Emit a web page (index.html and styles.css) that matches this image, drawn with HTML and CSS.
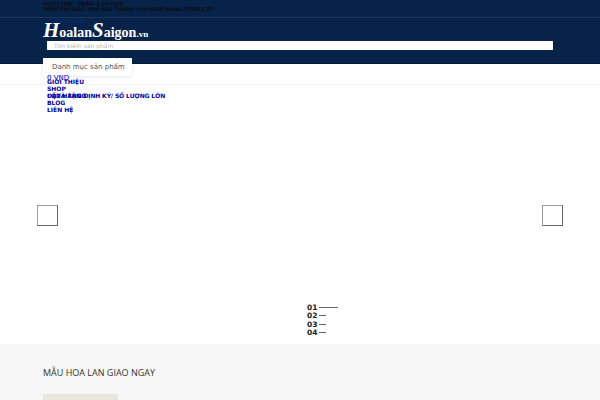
FILE: index.html
```html
<!DOCTYPE html>
<html lang="vi">
<head>
    <meta charset="UTF-8">
    <meta name="viewport" content="width=device-width, initial-scale=1.0">
    <title>Hoa Lan Sài Gòn</title>
    <link rel="stylesheet" href="styles.css">
</head>
<body>
    <header class="site-header">
        <div class="top-bar">
            <div class="wrap">
                <p class="top-line">HOTLINE: 0984-235-008</p>
                <p class="top-line top-line-long">MIỄN PHÍ GIAO HOA NỘI THÀNH CHO ĐƠN HÀNG TRÊN 1TR</p>
            </div>
        </div>
        <div class="wrap brand-row">
            <a class="account-link" href="#">Tài khoản</a>
            <a class="logo" href="#"><span class="logo-cap">H</span>oalan<span class="logo-cap">S</span>aigon<span class="logo-tld">.vn</span></a>
        </div>
        <div class="search-row">
            <input class="search-input" type="text" placeholder="Tìm kiếm sản phẩm">
        </div>
    </header>

    <nav class="main-nav">
        <div class="wrap">
            <div class="category-box">Danh mục sản phẩm</div>
            <a class="cart-link" href="#">0 VND</a>
            <ul class="menu">
                <li><a href="#">GIỚI THIỆU</a></li>
                <li><a href="#">SHOP</a></li>
                <li><a class="menu-long" href="#">ĐẶT HÀNG ĐỊNH KỲ/ SỐ LƯỢNG LỚN</a><a class="menu-over" href="#">QUÀ TẶNG</a></li>
                <li><a href="#">BLOG</a></li>
                <li><a href="#">LIÊN HỆ</a></li>
            </ul>
        </div>
    </nav>

    <section class="slider">
        <button class="slider-btn slider-prev"></button>
        <button class="slider-btn slider-next"></button>
        <ol class="slider-dots">
            <li><b>01</b><span class="dash dash-active"></span></li>
            <li><b>02</b><span class="dash"></span></li>
            <li><b>03</b><span class="dash"></span></li>
            <li><b>04</b><span class="dash"></span></li>
        </ol>
    </section>

    <section class="products">
        <div class="wrap">
            <h2 class="products-title">MẪU HOA LAN GIAO NGAY</h2>
            <div class="product-thumb"></div>
        </div>
    </section>
</body>
</html>
```

FILE: styles.css
```css
html, body {
    height: 400px;
    overflow: hidden;
}
body {
    margin: 0;
    font-family: "DejaVu Sans", sans-serif;
    background: #ffffff;
}
.wrap {
    margin: 0 43px;
}
.site-header {
    height: 64px;
    background: #07234a;
    border-bottom: 1px solid #04183a;
    box-sizing: border-box;
}
.top-bar {
    height: 18px;
    box-sizing: border-box;
    border-bottom: 1px solid #1c3658;
    padding-top: 1px;
}
.top-line {
    margin: 0;
    height: 5px;
    line-height: 6px;
    font-size: 6px;
    font-weight: bold;
    color: #0b0f1a;
}
.top-line-long {
    font-size: 5.5px;
    letter-spacing: -0.24px;
    white-space: nowrap;
}
.brand-row {
    position: relative;
    height: 23px;
}
.account-link {
    position: absolute;
    top: -1px;
    left: 12px;
    font-size: 6px;
    line-height: 7px;
    color: #0a2f86;
    text-decoration: none;
}
.logo {
    display: block;
    padding-top: 2px;
    font-family: "Liberation Serif", serif;
    font-size: 14px;
    line-height: 20px;
    font-weight: bold;
    color: #ffffff;
    text-decoration: none;
    white-space: nowrap;
}
.logo-cap {
    font-size: 21px;
    font-style: italic;
}
.logo-tld {
    font-size: 9px;
}
.search-row {
    padding-left: 47px;
}
.search-input {
    display: block;
    width: 506px;
    height: 9px;
    box-sizing: border-box;
    margin: 0;
    padding: 0 7px;
    border: 0;
    background: #ffffff;
    font-family: "DejaVu Sans", sans-serif;
    font-size: 6px;
    outline: 0;
}
.search-input::placeholder {
    color: #b5b5b5;
}
.main-nav {
    position: relative;
    display: flow-root;
    height: 56px;
}
.main-nav::after {
    content: "";
    position: absolute;
    left: 0;
    right: 0;
    top: 20px;
    height: 1px;
    background: #f5f5f5;
}
.main-nav .wrap {
    display: flow-root;
}
.category-box {
    position: relative;
    z-index: 1;
    width: 89px;
    height: 18px;
    margin-top: -6px;
    box-sizing: border-box;
    padding-left: 9px;
    background: #ffffff;
    box-shadow: 0 1px 3px rgba(0, 0, 0, 0.1);
    font-size: 7px;
    line-height: 18px;
    color: #555555;
    white-space: nowrap;
}
.cart-link {
    position: absolute;
    z-index: 1;
    top: 10px;
    left: 47px;
    font-size: 7px;
    line-height: 9px;
    color: #0000c8;
    text-decoration: none;
}
.menu {
    position: relative;
    z-index: 1;
    list-style: none;
    margin: 2px 0 0;
    padding: 0 0 0 4px;
}
.menu li {
    position: relative;
    height: 7px;
    font-size: 6px;
    line-height: 7px;
}
.menu a {
    font-weight: bold;
    color: #0000a8;
    text-decoration: none;
    white-space: nowrap;
}
.menu .menu-long {
    letter-spacing: -0.13px;
}
.menu-over {
    position: absolute;
    left: 4px;
    top: 0;
}
.slider {
    position: relative;
    height: 224px;
    background: #ffffff;
}
.slider-btn {
    position: absolute;
    top: 85px;
    width: 21px;
    height: 21px;
    padding: 0;
    background: #ffffff;
    border: 1px solid #9c9c9c;
    border-right-color: #666666;
    border-bottom-color: #666666;
}
.slider-prev {
    left: 37px;
}
.slider-next {
    right: 37px;
}
.slider-dots {
    position: absolute;
    left: 307px;
    top: 183px;
    margin: 0;
    padding: 0;
    list-style: none;
}
.slider-dots li {
    display: flex;
    align-items: center;
    gap: 2px;
    height: 8.5px;
    font-size: 7.5px;
    color: #222222;
}
.dash {
    display: block;
    width: 7px;
    height: 1px;
    background: #666666;
}
.dash-active {
    width: 19px;
}
.products {
    display: flow-root;
    height: 56px;
    background: #f7f7f7;
    overflow: hidden;
}
.products-title {
    margin: 22px 0 0;
    font-family: "Open Sans", sans-serif;
    font-size: 9px;
    line-height: 13px;
    font-weight: normal;
    color: #333333;
}
.product-thumb {
    width: 75px;
    height: 20px;
    margin-top: 15px;
    background: #ebe7df;
}
```
